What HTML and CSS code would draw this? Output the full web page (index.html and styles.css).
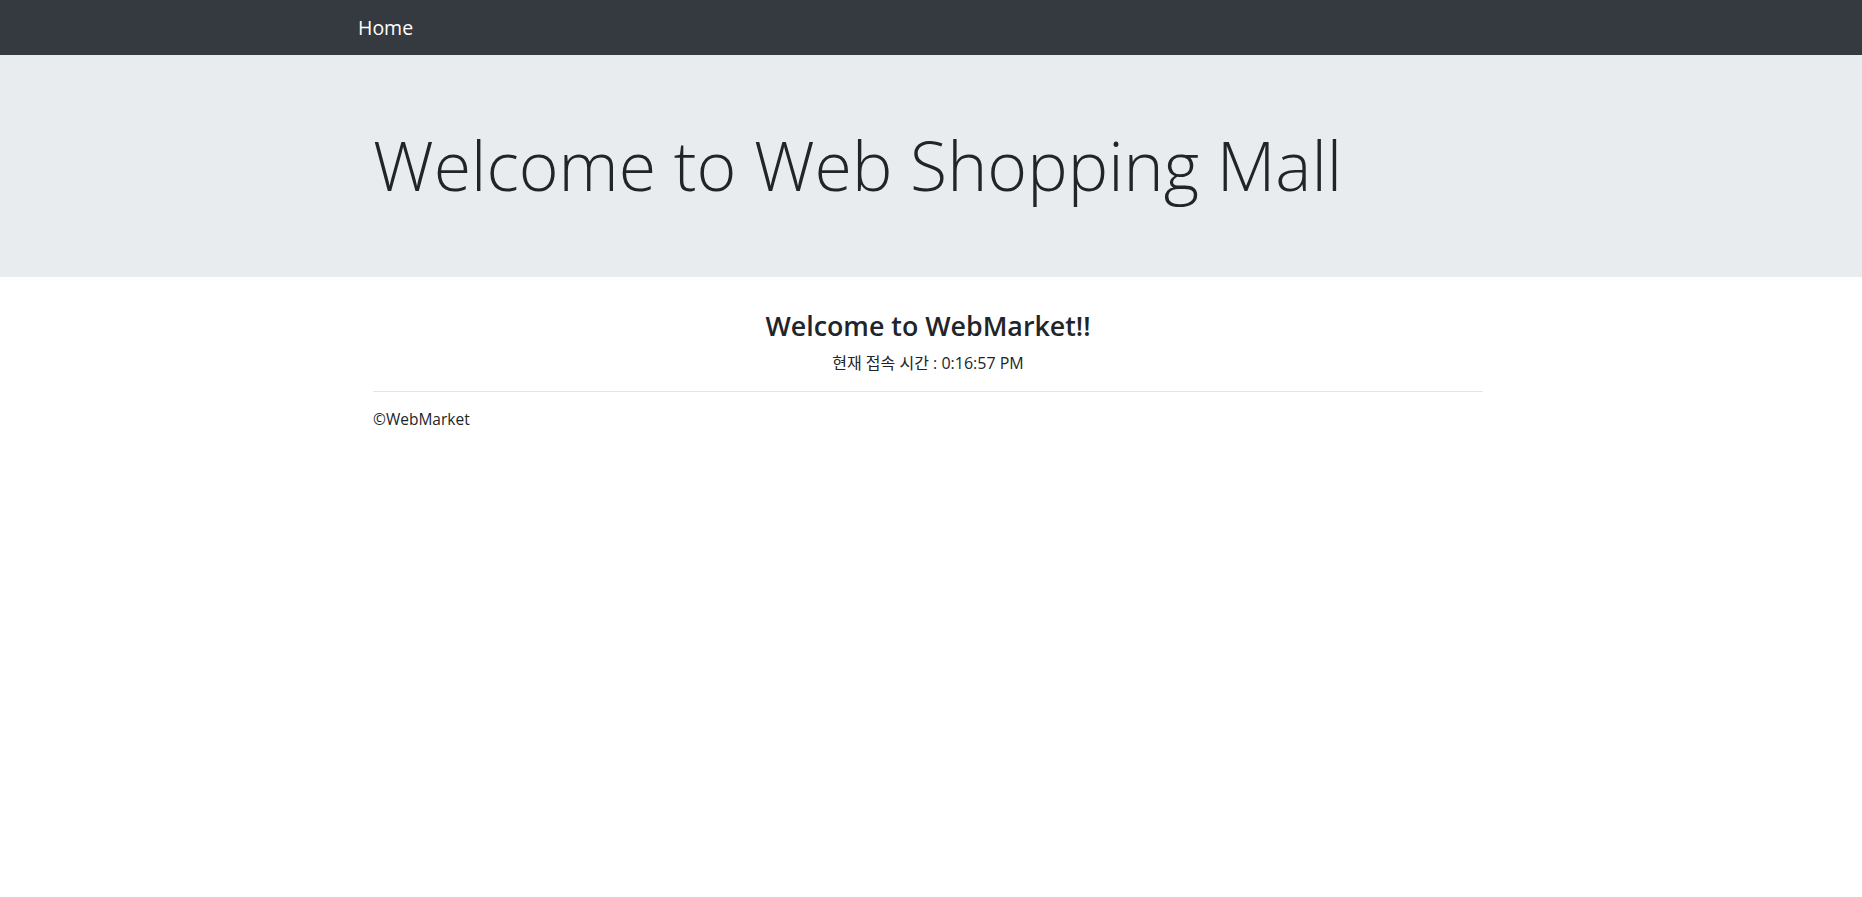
FILE: index.html
```html
<!DOCTYPE html>
<html lang="ko">
<head>
<meta charset="utf-8">
<title>Welcome</title>
<link rel="stylesheet" href="styles.css">
</head>
<body>
<nav class="navbar">
  <div class="container nav-container">
    <a class="navbar-brand" href="#">Home</a>
  </div>
</nav>
<div class="jumbotron">
  <div class="container">
    <h1 class="display-3">Welcome to Web Shopping Mall</h1>
  </div>
</div>
<main class="container">
  <div class="text-center">
    <h3 class="greeting">Welcome to WebMarket!!</h3>
    <div class="access-time">현재 접속 시간 : 0:16:57 PM</div>
  </div>
  <hr class="divider">
</main>
<footer class="container">
  <p class="copyright">&copy;WebMarket</p>
</footer>
</body>
</html>
```

FILE: styles.css
```css
* { box-sizing: border-box; }
html, body {
  margin: 0;
  padding: 0;
}
body {
  font-family: "Open Sans", "Noto Sans", "Noto Sans CJK KR", sans-serif;
  font-size: 16px;
  line-height: 1.5;
  color: #212529;
  background: #fff;
}
.container {
  width: 100%;
  max-width: 1140px;
  margin: 0 auto;
  padding: 0 15px;
  position: relative;
  left: -3px;
}
.navbar {
  background: #343a40;
  padding: 7px 16px 8px;
}
.nav-container {
  padding: 0;
  display: flex;
  align-items: center;
}
.navbar-brand {
  display: inline-block;
  padding: 6px 0 4px;
  font-size: 19.5px;
  line-height: 30px;
  color: #fff;
  text-decoration: none;
  white-space: nowrap;
}
.jumbotron {
  background: #e9ecef;
  padding: 67px 32px 61px;
  margin-bottom: 32px;
}
.jumbotron .container { padding: 0 15px; }
.display-3 {
  margin: 0 0 8px;
  font-size: 68px;
  font-weight: 300;
  line-height: 86px;
}
.text-center { text-align: center; }
.greeting {
  margin: 0 0 8px;
  font-size: 26.8px;
  font-weight: 600;
  line-height: 34px;
}
.access-time {
  font-size: 16px;
  line-height: 24px;
}
.divider {
  margin: 16px 0;
  border: 0;
  border-top: 1px solid rgba(0,0,0,.1);
}
.copyright {
  margin: 0 0 16px;
  font-size: 15.5px;
}
```
